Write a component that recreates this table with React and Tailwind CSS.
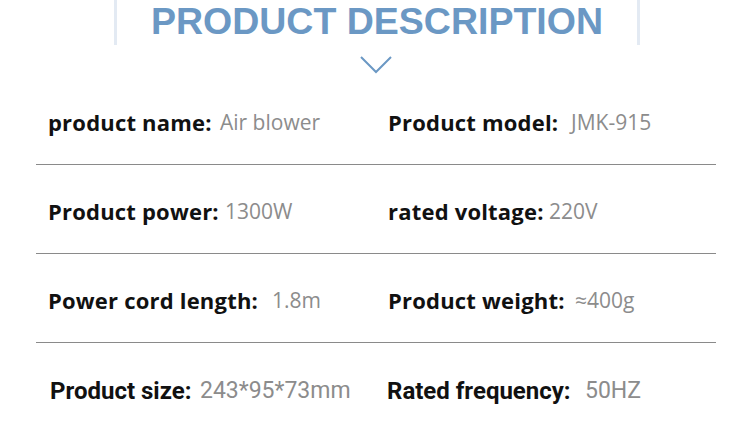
const rows = [
  {
    top: "pt-[108px]",
    cells: [
      { label: "product name:", value: "Air blower", lw: "w-[172px]" },
      { label: "Product model:", value: "JMK-915", lw: "w-[183px]" },
    ],
  },
  {
    top: "pt-[32px]",
    cells: [
      { label: "Product power:", value: "1300W", lw: "w-[177px]" },
      { label: "rated voltage:", value: "220V", lw: "w-[161px]" },
    ],
  },
  {
    top: "pt-[32px]",
    cells: [
      { label: "Power cord length:", value: "1.8m", lw: "w-[224px]" },
      { label: "Product weight:", value: "≈400g", lw: "w-[187px]" },
    ],
  },
];

function Row({ row }) {
  return (
    <div className={row.top}>
      <div className="flex h-[28px] items-center">
        {row.cells.map((c, i) => (
          <div key={i} className={`flex shrink-0 whitespace-nowrap ${i === 0 ? "w-[388px] pl-[48px]" : ""}`}>
            <span className={`${c.lw} text-[22px] leading-[28px] font-bold tracking-[0.2px] text-[#111]`}>{c.label}</span>
            <span className="text-[21px] leading-[28px] text-[#8c8c8c]">{c.value}</span>
          </div>
        ))}
      </div>
      <div className="ml-[36px] mt-[28px] w-[680px] h-px bg-[#8a8a8a]" />
    </div>
  );
}

export default function App() {
  return (
    <div
      className="w-[750px] h-[422px] bg-white overflow-hidden relative"
      style={{ fontFamily: '"Open Sans", "Noto Sans", sans-serif' }}
    >
      {/* header */}
      <div className="ml-[114px] w-[526px] h-[45px] border-x-[3px] border-[#e3eaf3] flex justify-center">
        <h1
          className="pt-[2px] text-[37.5px] leading-[38px] font-bold text-[#6b98c4] whitespace-nowrap"
          style={{ fontFamily: '"Liberation Sans", Arial, sans-serif' }}
        >
          PRODUCT DESCRIPTION
        </h1>
      </div>
      <div className="flex justify-center mt-[11px] pl-[1px]">
        <svg width="32" height="18" viewBox="0 0 32 18" fill="none">
          <path d="M1 1 L16 16 L31 1" stroke="#6b98c4" strokeWidth="2" />
        </svg>
      </div>

      <div className="absolute left-0 top-0 w-full">
        {rows.map((r, i) => (
          <Row key={i} row={r} />
        ))}
        <div
          className="pt-[34px] flex whitespace-nowrap"
          style={{ fontFamily: 'Roboto, "Liberation Sans", sans-serif' }}
        >
          <div className="flex w-[387px] pl-[50px]">
            <span className="w-[150px] text-[24px] leading-[28px] font-bold text-[#111]">Product size:</span>
            <span className="text-[23px] leading-[28px] text-[#8c8c8c]">243*95*73mm</span>
          </div>
          <div className="flex">
            <span className="w-[198px] text-[24px] leading-[28px] font-bold text-[#111]">Rated frequency:</span>
            <span className="text-[23px] leading-[28px] text-[#8c8c8c]">50HZ</span>
          </div>
        </div>
      </div>
    </div>
  );
}
